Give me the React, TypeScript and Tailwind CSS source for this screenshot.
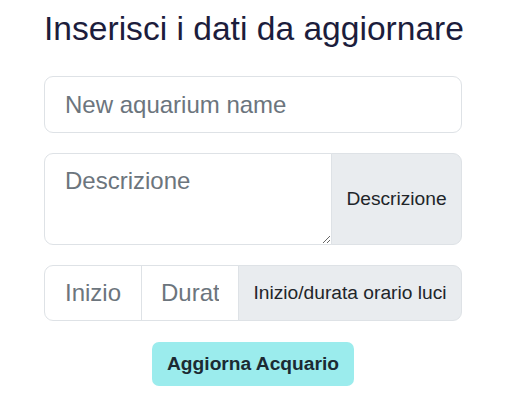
import React from "react";

export default function App() {
  const font = { fontFamily: '"Liberation Sans", Arial, sans-serif' };
  return (
    <div className="w-[508px] h-[419px] bg-white" style={font}>
      <div className="w-[418px] ml-[44px] pt-[9px] flex flex-col">
        <h3 className="text-[33.6px] leading-[1.2] text-[#1c1d3c] font-normal whitespace-nowrap">
          Inserisci i dati da aggiornare
        </h3>
        <input
          className="mt-[27px] h-[57px] w-full border border-[#dee2e6] rounded-[9px] px-[20px] text-[24px] text-[#212529] placeholder:text-[#6c757d] outline-none"
          placeholder="New aquarium name"
        />
        <div className="mt-[20px] flex h-[92px]">
          <textarea
            className="flex-1 min-w-0 border border-[#dee2e6] rounded-l-[9px] px-[20px] py-[9px] text-[24px] leading-[1.5] text-[#212529] placeholder:text-[#6c757d] outline-none resize-y"
            placeholder="Descrizione"
          />
          <div className="w-[131px] -ml-px flex items-center justify-center bg-[#e9ecef] border border-[#dee2e6] rounded-r-[9px] text-[19.2px] text-[#212529]">
            Descrizione
          </div>
        </div>
        <div className="mt-[20px] flex h-[56px]">
          <input
            className="w-[98px] min-w-0 border border-[#dee2e6] rounded-l-[9px] px-[20px] text-[24px] text-[#212529] placeholder:text-[#6c757d] outline-none"
            placeholder="Inizio"
          />
          <input
            className="w-[98px] -ml-px min-w-0 border border-[#dee2e6] px-[19px] text-[24px] text-[#212529] placeholder:text-[#6c757d] outline-none"
            placeholder="Durata"
          />
          <div className="flex-1 -ml-px flex items-center justify-center bg-[#e9ecef] border border-[#dee2e6] rounded-r-[9px] text-[19.2px] text-[#212529] whitespace-nowrap">
            Inizio/durata orario luci
          </div>
        </div>
        <div className="mt-[21px] flex justify-center">
          <button className="w-[202px] h-[44px] rounded-[7px] bg-[#9beced] text-[#1b2a33] font-bold text-[19.2px] flex items-center justify-center">
            Aggiorna Acquario
          </button>
        </div>
      </div>
    </div>
  );
}
